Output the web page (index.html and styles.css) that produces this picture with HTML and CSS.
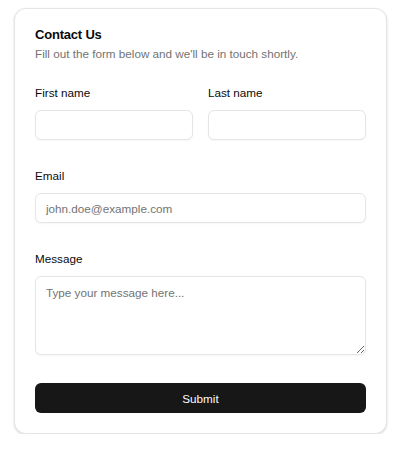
FILE: index.html
```html
<!DOCTYPE html>
<html lang="en">
<head>
<meta charset="utf-8">
<title>Contact Us</title>
<link rel="stylesheet" href="styles.css">
</head>
<body>
<form class="card">
  <div class="header">
    <h1 class="title">Contact Us</h1>
    <p class="subtitle">Fill out the form below and we'll be in touch shortly.</p>
  </div>
  <div class="row">
    <div class="field">
      <label class="label" for="first">First name</label>
      <input class="input" id="first" type="text">
    </div>
    <div class="field">
      <label class="label" for="last">Last name</label>
      <input class="input" id="last" type="text">
    </div>
  </div>
  <div class="field">
    <label class="label" for="email">Email</label>
    <input class="input" id="email" type="email" placeholder="john.doe@example.com">
  </div>
  <div class="field">
    <label class="label" for="msg">Message</label>
    <textarea class="input textarea" id="msg" placeholder="Type your message here..."></textarea>
  </div>
  <button class="submit" type="button">Submit</button>
</form>
</body>
</html>
```

FILE: styles.css
```css
* { box-sizing: border-box; }
html, body { margin: 0; padding: 0; background: #ffffff; }
body {
  font-family: "Liberation Sans", Arial, sans-serif;
  color: #0a0a0a;
  padding: 8px 13px 0 14px;
}
.card {
  display: flex;
  flex-direction: column;
  background: #ffffff;
  border: 1px solid #e5e5e5;
  border-radius: 12px;
  box-shadow: 0 1px 3px rgba(0,0,0,0.10), 0 1px 2px rgba(0,0,0,0.06);
  padding: 18px 20px 20px;
  height: 426px;
}
.header { display: flex; flex-direction: column; gap: 3px; margin-bottom: 23px; }
.title {
  margin: 0;
  font-size: 13px;
  line-height: 16px;
  font-weight: 700;
  letter-spacing: -0.2px;
  color: #0a0a0a;
}
.subtitle {
  margin: 0;
  font-size: 11.7px;
  line-height: 16px;
  color: #737373;
}
.row {
  display: grid;
  grid-template-columns: 1fr 1fr;
  gap: 15px;
  margin-bottom: 28px;
}
.row .field { margin-bottom: 0; }
.field {
  display: flex;
  flex-direction: column;
  gap: 9px;
  margin-bottom: 28px;
}
.label {
  font-size: 11.7px;
  line-height: 16px;
  color: #0a0a0a;
}
.input {
  width: 100%;
  height: 30px;
  border: 1px solid #e5e5e5;
  border-radius: 6px;
  padding: 0 10px;
  font-family: "Liberation Sans", Arial, sans-serif;
  font-size: 11.7px;
  color: #0a0a0a;
  background: #ffffff;
  box-shadow: 0 1px 2px rgba(0,0,0,0.04);
  outline: none;
}
.input::placeholder { color: #737373; }
.textarea {
  height: 79px;
  padding: 8px 10px;
  line-height: 16px;
  resize: vertical;
  display: block;
}
.submit {
  height: 30px;
  width: 100%;
  border: none;
  border-radius: 6px;
  background: #171717;
  color: #fafafa;
  font-family: "Liberation Sans", Arial, sans-serif;
  font-size: 11.7px;
  font-weight: 500;
}
```
